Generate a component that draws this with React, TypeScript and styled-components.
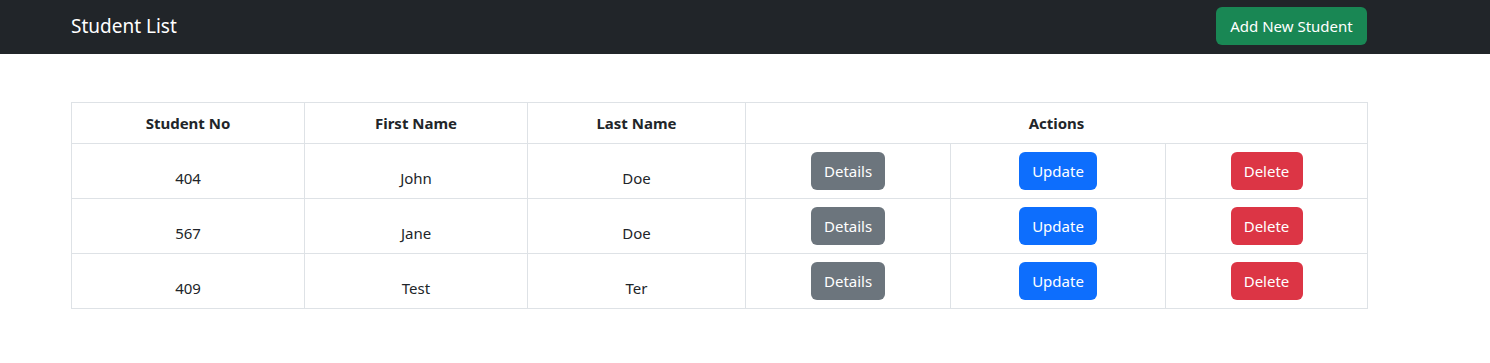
import React from "react";
import styled, { createGlobalStyle } from "styled-components";

const Global = createGlobalStyle`
  html, body { margin: 0; padding: 0; background: #fff; }
  body {
    font-family: "Noto Sans", "Open Sans", "Liberation Sans", sans-serif;
    font-size: 16px;
    line-height: 24px;
    color: #212529;
  }
  * { box-sizing: border-box; }
`;

const Navbar = styled.nav`
  background: #212529;
  height: 54px;
  display: flex;
  align-items: center;
  padding: 0 123px 2px 71px;
`;

const NavInner = styled.div`
  flex: 1;
  display: flex;
  align-items: center;
  justify-content: space-between;
`;

const Brand = styled.span`
  color: #fff;
  font-size: 19px;
  line-height: 30px;
`;

const Button = styled.button<{ $variant: "success" | "secondary" | "primary" | "danger"; $w?: number }>`
  font-family: inherit;
  font-size: 15px;
  line-height: 24px;
  height: 38px;
  padding: 6px 12px;
  border: 1px solid transparent;
  border-radius: 6px;
  color: #fff;
  cursor: pointer;
  width: ${(p) => (p.$w ? `${p.$w}px` : "auto")};
  background: ${(p) =>
    ({
      success: "#198754",
      secondary: "#6c757d",
      primary: "#0d6efd",
      danger: "#dc3545",
    })[p.$variant]};
`;

const Main = styled.main`
  padding: 48px 123px 0 71px;
`;

const Table = styled.table`
  width: 1296px;
  border-collapse: collapse;
  table-layout: fixed;
`;

const Th = styled.th`
  border: 1px solid #dee2e6;
  padding: 8px;
  font-weight: 700;
  text-align: center;
  font-size: 15px;
  height: 41px;
`;

const Td = styled.td`
  border: 1px solid #dee2e6;
  padding: 8px 8px 8px;
  text-align: center;
  vertical-align: bottom;
  font-size: 15px;
  height: 55px;
`;

const ActionTd = styled(Td)`
  vertical-align: top;
  padding: 8px;
`;

const students = [
  { no: 404, first: "John", last: "Doe" },
  { no: 567, first: "Jane", last: "Doe" },
  { no: 409, first: "Test", last: "Ter" },
];

export default function App() {
  return (
    <>
      <Global />
      <Navbar>
        <NavInner>
          <Brand>Student List</Brand>
          <Button $variant="success" $w={151}>Add New Student</Button>
        </NavInner>
      </Navbar>
      <Main>
        <Table>
          <colgroup>
            <col style={{ width: 233 }} />
            <col style={{ width: 223 }} />
            <col style={{ width: 218 }} />
            <col style={{ width: 205 }} />
            <col style={{ width: 215 }} />
            <col style={{ width: 202 }} />
          </colgroup>
          <thead>
            <tr>
              <Th>Student No</Th>
              <Th>First Name</Th>
              <Th>Last Name</Th>
              <Th colSpan={3}>Actions</Th>
            </tr>
          </thead>
          <tbody>
            {students.map((s) => (
              <tr key={s.no}>
                <Td>{s.no}</Td>
                <Td>{s.first}</Td>
                <Td>{s.last}</Td>
                <ActionTd>
                  <Button $variant="secondary" $w={74}>Details</Button>
                </ActionTd>
                <ActionTd>
                  <Button $variant="primary" $w={78}>Update</Button>
                </ActionTd>
                <ActionTd>
                  <Button $variant="danger" $w={72}>Delete</Button>
                </ActionTd>
              </tr>
            ))}
          </tbody>
        </Table>
      </Main>
    </>
  );
}
